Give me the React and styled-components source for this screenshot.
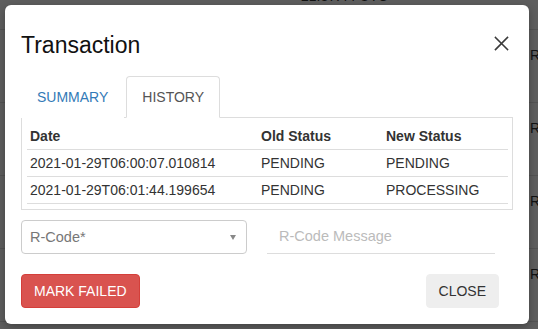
import React from 'react'
import styled, { createGlobalStyle } from 'styled-components'

const GlobalStyle = createGlobalStyle`
    html, body {
        margin: 0;
        padding: 0;
        background: #ffffff;
    }
    body {
        font-family: "Liberation Sans", Arial, sans-serif;
        font-size: 14px;
        color: #333;
    }
    * {
        box-sizing: border-box;
    }
`

const bgRows = [0, 1, 2, 3]

const historyRows = [
    { date: '2021-01-29T06:00:07.010814', from: 'PENDING', to: 'PENDING' },
    { date: '2021-01-29T06:01:44.199654', from: 'PENDING', to: 'PROCESSING' },
]

function CloseIcon() {
    return (
        <svg width="15" height="15" viewBox="0 0 15 15">
            <path d="M1.5 1.5 L13.5 13.5 M13.5 1.5 L1.5 13.5" stroke="#3a3a3a" strokeWidth="1.6" strokeLinecap="square" fill="none" />
        </svg>
    )
}

function App() {
    return (
        <Page>
            <GlobalStyle />
            <BgTable>
                <BgTopRow>
                    <BgTime>21:37:44 UTC</BgTime>
                </BgTopRow>
                {bgRows.map((i) => (
                    <BgRow key={i}>
                        <BgCode>RC01</BgCode>
                    </BgRow>
                ))}
            </BgTable>
            <Backdrop />
            <Modal>
                <Header>
                    <Title>Transaction</Title>
                    <CloseButton aria-label="close">
                        <CloseIcon />
                    </CloseButton>
                </Header>
                <Body>
                    <Tabs>
                        <Tab>SUMMARY</Tab>
                        <Tab active>HISTORY</Tab>
                    </Tabs>
                    <Panel>
                        <HistoryRow head>
                            <Cell>Date</Cell>
                            <Cell>Old Status</Cell>
                            <Cell>New Status</Cell>
                        </HistoryRow>
                        {historyRows.map((r) => (
                            <HistoryRow key={r.date}>
                                <Cell>{r.date}</Cell>
                                <Cell>{r.from}</Cell>
                                <Cell>{r.to}</Cell>
                            </HistoryRow>
                        ))}
                    </Panel>
                    <FormRow>
                        <Select>
                            <span>R-Code*</span>
                            <Caret />
                        </Select>
                        <TextInput placeholder="R-Code Message" />
                    </FormRow>
                    <Footer>
                        <Button danger>MARK FAILED</Button>
                        <Button>CLOSE</Button>
                    </Footer>
                </Body>
            </Modal>
        </Page>
    )
}

const Page = styled.div`
    position: relative;
    width: 538px;
    height: 329px;
    overflow: hidden;
    background: #fff;
`

const BgTable = styled.div`
    display: flex;
    flex-direction: column;
`

const BgTopRow = styled.div`
    height: 30px;
    border-bottom: 1px solid #e2e2e2;
    padding-left: 301px;
`

const BgTime = styled.div`
    margin-top: -12px;
    line-height: 16px;
    color: #333;
`

const BgRow = styled.div`
    height: 73px;
    border-bottom: 1px solid #e2e2e2;
    padding: 17px 0 0 530px;
    color: #333;
    white-space: nowrap;
`

const BgCode = styled.span`
    font-size: 14px;
`

const Backdrop = styled.div`
    position: absolute;
    inset: 0;
    background: rgba(0, 0, 0, 0.63);
`

const Modal = styled.div`
    position: absolute;
    left: 5px;
    top: 5px;
    width: 524px;
    height: 319px;
    background: #fff;
    border-radius: 6px;
    box-shadow: 0 3px 9px rgba(0, 0, 0, 0.3);
    padding: 27px 0 16px;
`

const Header = styled.div`
    display: flex;
    justify-content: space-between;
    align-items: flex-start;
    padding: 0 20px 0 16px;
`

const Title = styled.h4`
    margin: 0;
    font-size: 23px;
    font-weight: normal;
    line-height: 26px;
    color: #111;
`

const CloseButton = styled.button`
    border: 0;
    background: none;
    padding: 0;
    margin-top: 4px;
    display: flex;
    cursor: pointer;
`

const Body = styled.div`
    padding: 0 16px;
`

const Tabs = styled.div`
    display: flex;
    margin-top: 18px;
    height: 41px;
`

const Tab = styled.a`
    display: block;
    height: 42px;
    padding: 10px 15px;
    margin-right: 2px;
    line-height: 20px;
    font-size: 14px;
    border: 1px solid ${(p) => (p.active ? '#ddd' : 'transparent')};
    border-bottom-color: ${(p) => (p.active ? '#fff' : 'transparent')};
    border-radius: 4px 4px 0 0;
    background: #fff;
    color: ${(p) => (p.active ? '#555' : '#337ab7')};
    position: relative;
    z-index: 1;
`

const Panel = styled.div`
    border: 1px solid #ddd;
    padding: 5px 4px 5px 5px;
`

const HistoryRow = styled.div`
    display: grid;
    grid-template-columns: 231px 125px 1fr;
    height: 27px;
    align-items: center;
    border-bottom: 1px solid #ddd;
    font-weight: ${(p) => (p.head ? 'bold' : 'normal')};
    color: #333;
`

const Cell = styled.div`
    padding-left: 3px;
    white-space: nowrap;
`

const FormRow = styled.div`
    display: flex;
    gap: 20px;
    margin-top: 10px;
`

const Select = styled.div`
    width: 226px;
    height: 34px;
    border: 1px solid #ccc;
    border-radius: 4px;
    display: flex;
    align-items: center;
    justify-content: space-between;
    padding: 0 10px 0 8px;
    color: #777;
    font-size: 14.5px;
`

const Caret = styled.span`
    width: 0;
    height: 0;
    border-left: 3.5px solid transparent;
    border-right: 3.5px solid transparent;
    border-top: 5px solid #888;
    margin-top: 1px;
`

const TextInput = styled.input`
    width: 228px;
    height: 34px;
    border: 0;
    border-bottom: 1px solid #ddd;
    padding: 0 0 2px 12px;
    font-family: inherit;
    font-size: 14.5px;
    outline: none;
    &::placeholder {
        color: #bbb;
    }
`

const Footer = styled.div`
    display: flex;
    justify-content: space-between;
    margin-top: 20px;
    padding-right: 14px;
`

const Button = styled.button`
    height: 34px;
    padding: 0 12px;
    font-family: inherit;
    font-size: 14px;
    border-radius: 4px;
    border: 1px solid ${(p) => (p.danger ? '#d43f3a' : '#eee')};
    background: ${(p) => (p.danger ? '#d9534f' : '#eee')};
    color: ${(p) => (p.danger ? '#fff' : '#333')};
    cursor: pointer;
`

export default App
